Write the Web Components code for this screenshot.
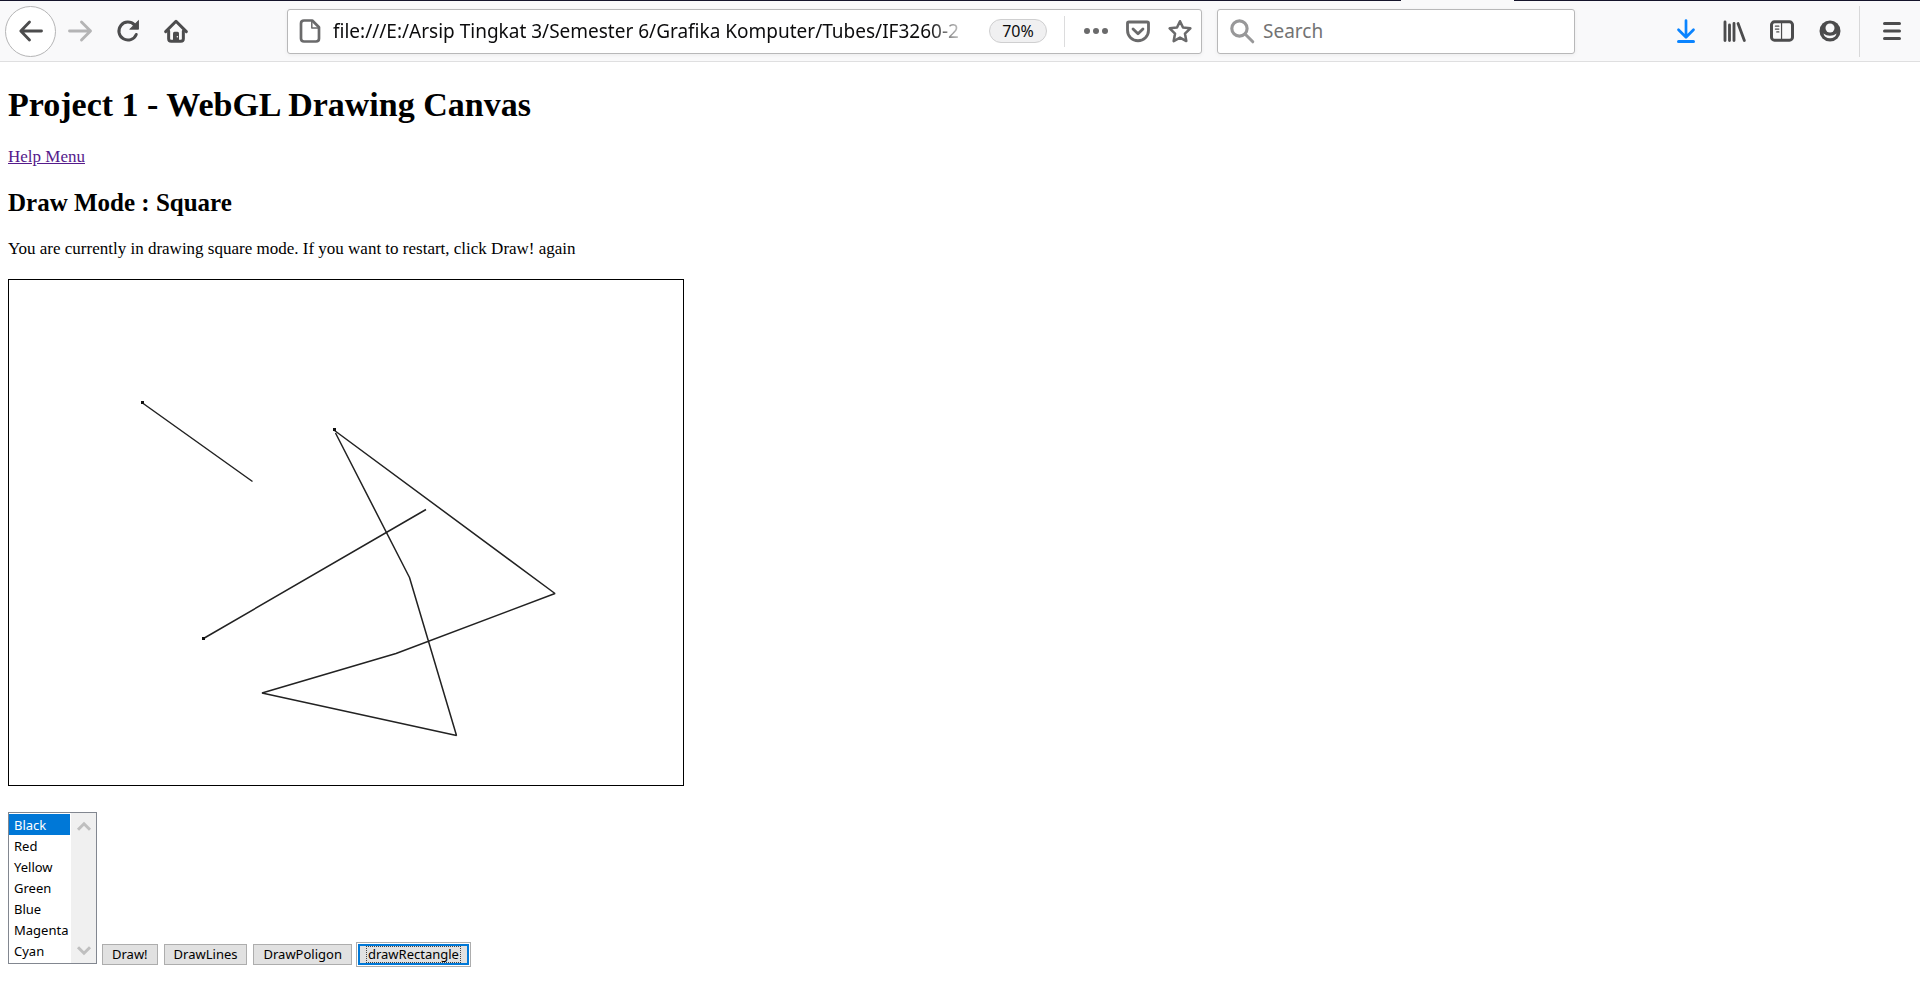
<!DOCTYPE html>
<html lang="en">
<head>
<meta charset="utf-8">
<title>Project 1 - WebGL Drawing Canvas</title>
<style>
html, body { margin: 0; background: #fff; }
</style>
</head>
<body>
<browser-toolbar></browser-toolbar>
<drawing-page>
  <span slot="title">Project 1 - WebGL Drawing Canvas</span>
  <span slot="mode">Draw Mode : Square</span>
  <span slot="hint">You are currently in drawing square mode. If you want to restart, click Draw! again</span>
</drawing-page>

<script>
const define = (name, html) => {
  const template = document.createElement('template');
  template.innerHTML = html;
  customElements.define(name, class extends HTMLElement {
    constructor() {
      super();
      this.attachShadow({ mode: 'open' }).append(template.content.cloneNode(true));
    }
  });
};

const ICONS = {
  back: '<path d="M15 8H2M7 2 1.200 8 7 14" stroke-width="1.900"/>',
  forward: '<path d="M1 8h14M9 2l6 6-6 6" stroke-width="1.900"/>',
  reload: '<path d="M13.500 10.300A6 6 0 1 1 12.300 3.900" stroke-width="2"/><path d="M15 1.200v5.600H9.400z" fill="currentColor" stroke-width="0.600"/>',
  home: '<path d="M1.100 8.400 8 1.500l6.900 6.900" stroke-width="2"/><path d="M3.100 8v5.200Q3.100 14.900 4.800 14.900H11.200Q12.900 14.900 12.900 13.200V8" stroke-width="2"/><path d="M6 15V9.500Q6 8.500 7 8.500h2q1 0 1 1V15z" fill="currentColor" stroke="none"/><circle cx="8.900" cy="11.900" r=".5" fill="#f9f9fa" stroke="none"/>',
  page: '<path d="M4 1h5.500L14 5.500V13q0 2-2 2H4q-2 0-2-2V3q0-2 2-2z" stroke-width="1.800"/><path d="M9.200 1.500V6h4.500" stroke-width="1"/>',
  more: '<g fill="currentColor" stroke="none"><circle cx="2" cy="8" r="2"/><circle cx="8" cy="8" r="2"/><circle cx="14" cy="8" r="2"/></g>',
  pocket: '<path d="M1.900 2h12.200q.9 0 .9.900V7.500a7 7 0 0 1-14 0V2.900q0-.9.900-.9z" stroke-width="1.900"/><path d="M4.700 6.600 8 9.800l3.300-3.200" stroke-width="1.900"/>',
  star: '<path d="m8 1.500 2 4.200 4.900.5-3.600 3.500.9 5L8 12.400l-4.200 2.300.9-5L1.100 6.200 6 5.700z" stroke-width="1.700"/>',
  search: '<circle cx="6.300" cy="6.300" r="5.100" stroke-width="2.100"/><path d="m10.200 10.200 5 5" stroke-width="2"/>',
  download: '<path d="M8 1v10.800M3 7.200l5 5 5-5" stroke-width="1.800"/><path d="M3 15h10" stroke-width="2"/>',
  library: '<path d="M2 2v12.400M5 4v10.400M8 3v11.400M10.700 3l4.200 11.300" stroke-width="1.900"/>',
  sidebar: '<rect x="1" y="1.900" width="14" height="12.200" rx="2" stroke-width="2"/><path d="M7.700 2v12" stroke-width=".8"/><path d="M3.600 4.800h2.300M3.600 6.700h2.300M4.500 8.600h1.400" stroke-width=".8"/>',
  account: '<circle cx="8" cy="8" r="7" fill="currentColor" stroke="none"/><circle cx="8" cy="6" r="3" fill="#f9f9fa" stroke="none"/><path d="M3.600 9.700Q4.500 12.900 8 12.900T12.400 9.700Q10.500 11.200 8 11.200T3.600 9.700z" fill="#f9f9fa" stroke="none"/>',
  menu: '<path d="M3 3h10M3 8h10M3 13h10" stroke-width="2"/>',
  up: '<path d="M4 10.500 8 6.500l4 4" stroke-width="2" stroke-linecap="butt" stroke-linejoin="miter"/>',
  down: '<path d="M4 5.500l4 4 4-4" stroke-width="2" stroke-linecap="butt" stroke-linejoin="miter"/>'
};

/* <tool-icon name="…"> : a 24px toolbar glyph */
customElements.define('tool-icon', class extends HTMLElement {
  connectedCallback() {
    if (this.shadowRoot) return;
    this.attachShadow({ mode: 'open' }).innerHTML = `
      <style>
        :host { display: block; flex: none; width: 24px; height: 24px; }
        svg { display: block; width: 100%; height: 100%; overflow: visible; }
      </style>
      <svg viewBox="0 0 16 16" fill="none" stroke="currentColor" stroke-linecap="round" stroke-linejoin="round" aria-hidden="true">${ICONS[this.getAttribute('name')]}</svg>`;
  }
});

/* <tool-button icon="…" label="…" [round] [compact]> */
customElements.define('tool-button', class extends HTMLElement {
  connectedCallback() {
    if (this.shadowRoot) return;
    this.attachShadow({ mode: 'open' }).innerHTML = `
      <style>
        :host { display: block; flex: none; }
        button {
          display: flex; align-items: center; justify-content: center;
          box-sizing: border-box; width: 48px; height: 48px; margin: 0; padding: 0;
          border: 0; background: none; color: inherit;
        }
        :host([round]) button { width: 51px; height: 51px; border: 1px solid #b5b5b6; border-radius: 50%; background: #fff; }
        :host([compact]) button { width: 42px; height: 42px; }
      </style>
      <button type="button" aria-label="${this.getAttribute('label')}"><tool-icon name="${this.getAttribute('icon')}"></tool-icon></button>`;
  }
});

define('url-bar', `
  <style>
    :host {
      display: flex; align-items: center; box-sizing: border-box; height: 45px; min-width: 0;
      padding: 0 0 0 10px; border: 1px solid #b8b8b9; border-radius: 3px; background: #fff;
      box-shadow: 0 1px 4px rgba(0,0,0,.06); color: #6a6a6b;
    }
    .address {
      flex: 1; min-width: 0; height: 40px; margin: 0 12px 0 11px; padding: 0; border: 0; outline: 0; background: none;
      color: #0c0c0d; font: 19px "Noto Sans", sans-serif;
      -webkit-mask-image: linear-gradient(to left, transparent 8px, #000 48px);
      mask-image: linear-gradient(to left, transparent 8px, #000 48px);
    }
    .zoom {
      box-sizing: border-box; width: 58px; height: 24px; margin: 0 17px 0 0; padding: 0;
      border: 1px solid #cfcfd0; border-radius: 12px; background: #f0f0f1;
      color: #0c0c0d; font: 16px/22px "Noto Sans", sans-serif;
    }
    .rule { width: 1px; height: 31px; margin-right: 10px; background: #dcdcdd; }
  </style>
  <tool-icon name="page"></tool-icon>
  <input class="address" type="text" aria-label="Address" value="file:///E:/Arsip Tingkat 3/Semester 6/Grafika Komputer/Tubes/IF3260-2">
  <button class="zoom" type="button">70%</button>
  <span class="rule"></span>
  <tool-button compact icon="more" label="Page actions"></tool-button>
  <tool-button compact icon="pocket" label="Save to Pocket"></tool-button>
  <tool-button compact icon="star" label="Bookmark this page"></tool-button>
`);

define('search-bar', `
  <style>
    :host {
      display: flex; align-items: center; box-sizing: border-box; height: 45px; min-width: 0;
      padding: 0 12px; border: 1px solid #b8b8b9; border-radius: 3px; background: #fff;
      box-shadow: 0 1px 4px rgba(0,0,0,.06); color: #989899;
    }
    input {
      flex: 1; min-width: 0; height: 40px; margin: 0 0 0 9px; padding: 0; border: 0; outline: 0;
      background: none; font: 19px "Noto Sans", sans-serif;
    }
    input::placeholder { color: #737373; }
  </style>
  <tool-icon name="search"></tool-icon>
  <input type="text" aria-label="Search" placeholder="Search">
`);

define('browser-toolbar', `
  <style>
    :host { display: block; border-bottom: 1px solid #dfdfe0; background: #f9f9fa; color: #4c4c4d; }
    .tabs { display: flex; height: 1px; }
    .tabs i { flex: 1401; background: #15142b; }
    .tabs b { flex: 113; }
    .tabs i:last-child { flex: 406; }
    nav { display: flex; align-items: center; height: 60px; padding: 0 4px 0 5px; }
    .space { flex: 87 1 87px; }
    url-bar { flex: 915 1 915px; margin-right: 15px; }
    search-bar { flex: 358 1 358px; }
    .off { color: #b4b4b5; }
    .active { color: #0a84ff; }
    .rule { width: 1px; height: 51px; margin: 0 8px 0 5px; background: #d8d8d9; }
  </style>
  <div class="tabs"><i></i><b></b><i></i></div>
  <nav aria-label="Browser">
    <tool-button round icon="back" label="Back"></tool-button>
    <tool-button class="off" icon="forward" label="Forward"></tool-button>
    <tool-button icon="reload" label="Reload"></tool-button>
    <tool-button icon="home" label="Home"></tool-button>
    <span class="space"></span>
    <url-bar></url-bar>
    <search-bar></search-bar>
    <span class="space"></span>
    <tool-button class="active" icon="download" label="Downloads"></tool-button>
    <tool-button icon="library" label="Library"></tool-button>
    <tool-button icon="sidebar" label="Sidebars"></tool-button>
    <tool-button icon="account" label="Account"></tool-button>
    <span class="rule"></span>
    <tool-button icon="menu" label="Open menu"></tool-button>
  </nav>
`);

/* The drawing surface, with two lines and one polygon on it. */
define('drawing-canvas', `
  <style>
    :host { display: block; box-sizing: border-box; width: 676px; max-width: 100%; border: 1px solid #000; }
    svg { display: block; width: 100%; height: auto; }
  </style>
  <svg viewBox="0 0 674 505" role="img" aria-label="Drawing" fill="none" stroke="#222" stroke-width="1.500">
    <path d="M133.500 123 243.500 201.500M194.500 358.500 417 229.500"/>
    <path d="M325.500 150.500 546 313.500 387 373.500 253 413 447.500 455.500 400.500 297.500 326.500 153" stroke-linejoin="bevel"/>
    <g fill="#111" stroke="none">
      <rect x="132" y="121" width="3" height="3"/><rect x="193" y="357" width="3" height="3"/><rect x="324" y="148" width="3" height="3"/>
    </g>
  </svg>
`);

define('color-list', `
  <style>
    :host { display: flex; flex: none; box-sizing: border-box; height: 152px; padding: 1px 0; border: 1px solid #828790; background: #fff; }
    select {
      display: block; box-sizing: border-box; width: 61px; height: 148px; margin: 0 1px 0 0; padding: 0;
      border: 0; border-radius: 0; outline: 0; background: #fff; color: #000;
      font: 13px "Noto Sans", sans-serif; overflow: hidden;
    }
    option { box-sizing: border-box; height: 21px; min-height: 21px; padding: 2px 0 0 5px; line-height: 19px; }
    option:checked { background: #0078d7 linear-gradient(#0078d7, #0078d7); color: #fff; }
    .bar { display: flex; flex-direction: column; justify-content: space-between; align-items: center; width: 25px; margin: -1px 0; padding-top: 1px; background: #f0f0f0; color: #bfbfbf; }
  </style>
  <select size="7" aria-label="Color">
    <option selected>Black</option><option>Red</option><option>Yellow</option><option>Green</option><option>Blue</option><option>Magenta</option><option>Cyan</option>
  </select>
  <div class="bar" aria-hidden="true"><tool-icon name="up"></tool-icon><tool-icon name="down"></tool-icon></div>
`);

define('draw-button', `
  <style>
    :host { display: block; flex: none; }
    button {
      display: block; box-sizing: border-box; height: 21px; margin: 0; padding: 0 9px;
      border: 1px solid #adadad; border-radius: 0; background: #e1e1e1; color: #000;
      font: 13px/19px "Noto Sans", sans-serif; white-space: nowrap;
    }
    :host([current]) button {
      padding: 0 6px; line-height: 17px;
      border: 2px solid #0078d7; outline: 1px solid #adadad; outline-offset: 1px;
    }
    :host([current]) span { display: block; outline: 1px dotted #444; outline-offset: -1px; padding: 0 2px; }
  </style>
  <button type="button"><span><slot></slot></span></button>
`);

define('drawing-page', `
  <style>
    :host { display: block; padding: 0 8px 8px; color: #000; font: 17px/19px "Liberation Serif", serif; }
    h1 { margin: 23px 0 22px; font-size: 34px; line-height: 40px; }
    h2 { margin: 22px 0; font-size: 25px; line-height: 29px; }
    p { margin: 0 0 21px; }
    a { color: #551a8b; }
    drawing-canvas { margin-bottom: 26px; }
    .controls { display: flex; align-items: flex-end; gap: 5px; }
    .buttons { display: flex; gap: 6px; margin-bottom: -1px; }
  </style>
  <h1><slot name="title"></slot></h1>
  <a href="#help">Help Menu</a>
  <h2><slot name="mode"></slot></h2>
  <p><slot name="hint"></slot></p>
  <drawing-canvas></drawing-canvas>
  <div class="controls">
    <color-list></color-list>
    <div class="buttons">
      <draw-button>Draw!</draw-button>
      <draw-button>DrawLines</draw-button>
      <draw-button>DrawPoligon</draw-button>
      <draw-button current>drawRectangle</draw-button>
    </div>
  </div>
`);
</script>
</body>
</html>
